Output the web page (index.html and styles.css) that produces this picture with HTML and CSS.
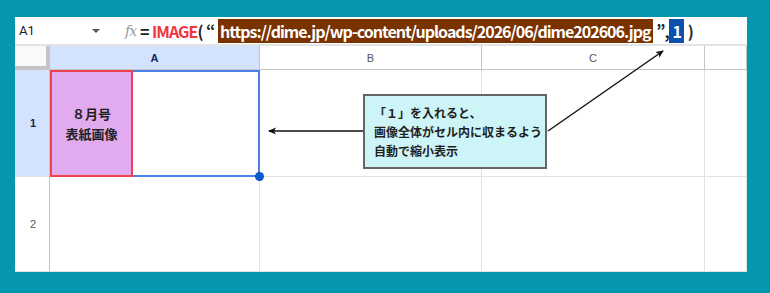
FILE: index.html
```html
<!doctype html>
<html lang="ja">
  <head>
    <meta charset="UTF-8" />
    <title>IMAGE関数 モード1</title>
    <link rel="stylesheet" href="styles.css">
  </head>
  <body>
    <div class="sheet">
      <div class="formula-bar">
        <div class="name-box">
          <span>A1</span>
          <span class="caret"></span>
        </div>
        <div class="fx">fx</div>
        <div class="formula">= <span class="fn">IMAGE</span>( “ <span class="url">https://dime.jp/wp-content/uploads/2026/06/dime202606.jpg</span> ”,<span class="mode">1</span> )</div>
      </div>

      <div class="grid">
        <div class="corner"></div>
        <div class="col-head active">A</div>
        <div class="col-head">B</div>
        <div class="col-head">C</div>
        <div class="col-head"></div>

        <div class="row-head active">1</div>
        <div class="cell selected">
          <div class="cover">８月号<br>表紙画像</div>
        </div>
        <div class="cell"></div>
        <div class="cell"></div>
        <div class="cell"></div>

        <div class="row-head">2</div>
        <div class="cell"></div>
        <div class="cell"></div>
        <div class="cell"></div>
        <div class="cell"></div>
      </div>

      <div class="callout">
        「１」を入れると、<br>
        画像全体がセル内に収まるよう<br>
        自動で縮小表示
      </div>

      <svg class="arrows" width="732" height="255" viewBox="0 0 732 255">
        <defs>
          <marker id="head" markerWidth="8" markerHeight="8" refX="7" refY="4" orient="auto" markerUnits="userSpaceOnUse">
            <path d="M0,0.5 L8,4 L0,7.5 L2,4 Z" fill="#111" />
          </marker>
        </defs>
        <line x1="348" y1="114" x2="254" y2="114" stroke="#111" stroke-width="1.5" marker-end="url(#head)" />
        <line x1="533" y1="114" x2="648" y2="34" stroke="#111" stroke-width="1.5" marker-end="url(#head)" />
      </svg>
    </div>
  </body>
</html>
```

FILE: styles.css
```css
:root {
  --frame-color: #0596b0;
  --grid-line: #e1e1e1;
  --header-line: #c4c4c4;
  --select-bg: #d3e3fd;
  --select-blue: #4a82ea;
  --text-color: #1f1f1f;
}

* {
  margin: 0;
  padding: 0;
  box-sizing: border-box;
}

body {
  background-color: var(--frame-color);
  font-family: "Noto Sans CJK JP", "Noto Sans", sans-serif;
  color: var(--text-color);
  padding: 17px 23px 21px 15px;
  width: 770px;
  height: 293px;
  overflow: hidden;
}

.sheet {
  position: relative;
  width: 732px;
  height: 255px;
  background-color: #ffffff;
}

.formula-bar {
  display: flex;
  align-items: center;
  border-bottom: 2px solid #e3e3e3;
  height: 29px;
}

.name-box {
  width: 110px;
  display: flex;
  align-items: center;
  justify-content: space-between;
  padding: 0 25px 0 4px;
  font-family: "Roboto", sans-serif;
  font-size: 13px;
  color: #202124;
}

.caret {
  width: 0;
  height: 0;
  border-left: 4px solid transparent;
  border-right: 4px solid transparent;
  border-top: 4px solid #555;
}

.fx {
  width: 18px;
  font-family: "DejaVu Serif", serif;
  font-style: italic;
  font-size: 14px;
  color: #9a9a9a;
  letter-spacing: -1px;
}

.formula {
  margin-left: -3px;
  font-size: 16px;
  font-weight: 700;
  letter-spacing: -1px;
  word-spacing: 1px;
  white-space: nowrap;
  color: #222;
}

.fn {
  color: #f0353f;
}

.url {
  background-color: #7a3200;
  color: #ffffff;
  padding: 0 2px;
  word-spacing: 0;
}

.mode {
  background-color: #0c4fae;
  color: #ffffff;
  padding: 0 3px 0 4px;
}

.grid {
  display: grid;
  grid-template-columns: 35px 210px 222px 223px 42px;
  grid-template-rows: 24px 107px 95px;
}

.corner {
  background-color: #f8f9fa;
  border-right: 4px solid #c4c4c4;
  border-bottom: 4px solid #c4c4c4;
}

.col-head {
  display: flex;
  align-items: center;
  justify-content: center;
  font-family: "Liberation Sans", sans-serif;
  font-size: 11px;
  color: #555;
  border-right: 1px solid var(--header-line);
  border-bottom: 1px solid var(--header-line);
}

.row-head {
  display: flex;
  align-items: center;
  justify-content: center;
  font-family: "Liberation Sans", sans-serif;
  font-size: 11px;
  color: #555;
  border-right: 1px solid var(--header-line);
  border-bottom: 1px solid var(--grid-line);
  padding-left: 2px;
}

.col-head.active,
.row-head.active {
  background-color: var(--select-bg);
  color: #0b2a5b;
  font-weight: 700;
}

.cell {
  border-right: 1px solid var(--grid-line);
  border-bottom: 1px solid var(--grid-line);
}

.cell.selected {
  position: relative;
  display: flex;
  border: 2px solid var(--select-blue);
  border-left: none;
}

.cell.selected::after {
  content: "";
  position: absolute;
  right: -6px;
  bottom: -6px;
  width: 9px;
  height: 9px;
  border-radius: 50%;
  background-color: #0b57d0;
  z-index: 2;
}

.cover {
  width: 83px;
  margin-top: -2px;
  margin-bottom: -2px;
  background-color: #e2aaef;
  border: 2px solid #f0424e;
  display: flex;
  align-items: center;
  justify-content: center;
  text-align: center;
  font-size: 13px;
  font-weight: 700;
  line-height: 20px;
  color: #1f1f1f;
}

.callout {
  position: absolute;
  left: 348px;
  top: 77px;
  width: 184px;
  height: 75px;
  background-color: #cdf4f6;
  border: 2px solid #656565;
  padding: 7px 0 0 9px;
  font-size: 12px;
  font-weight: 700;
  line-height: 19px;
  color: #1f1f1f;
  white-space: nowrap;
}

.arrows {
  position: absolute;
  left: 0;
  top: 0;
  pointer-events: none;
}
```
